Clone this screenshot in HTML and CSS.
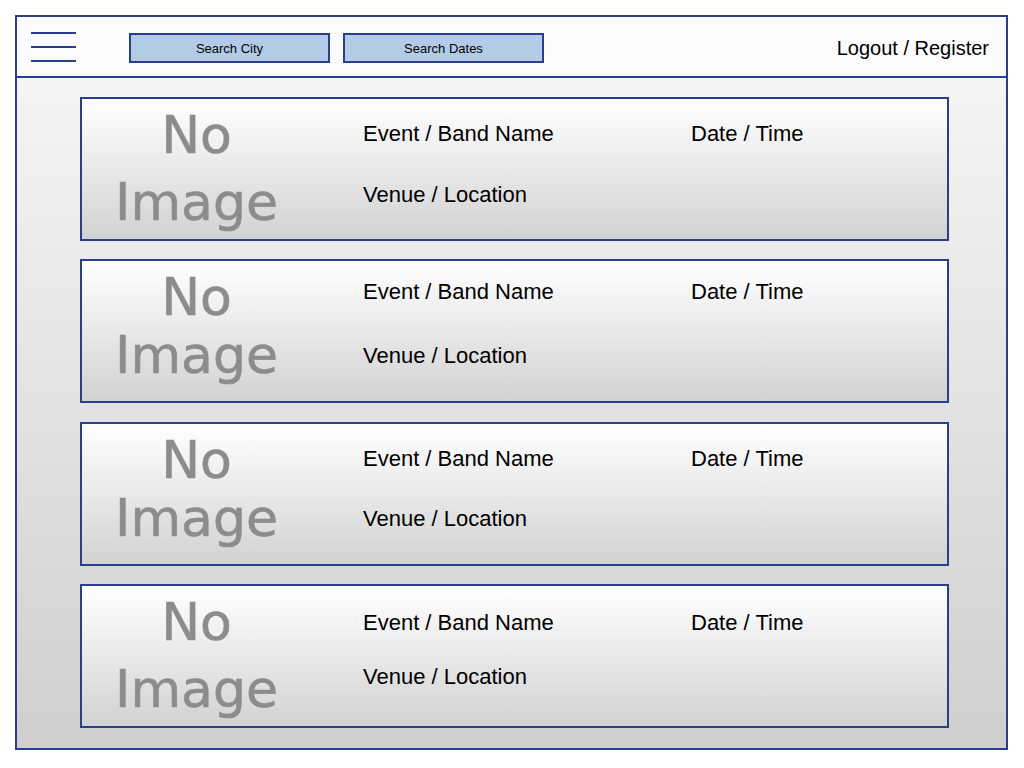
FILE: index.html
```html
<!DOCTYPE html>
<html>
<head>
<meta charset="utf-8">
<title>Events</title>
<link rel="stylesheet" href="styles.css">
</head>
<body>
<div class="frame">
  <header class="topbar">
    <div class="burger"><span></span><span></span><span></span></div>
    <button class="search-btn">Search City</button>
    <button class="search-btn">Search Dates</button>
    <a class="auth">Logout / Register</a>
  </header>
  <main class="list">
    <article class="card">
      <div class="thumb"><span class="w1">No</span><span class="w2">Image</span></div>
      <div class="info">
        <div class="name">Event / Band Name</div>
        <div class="when">Date / Time</div>
        <div class="where">Venue / Location</div>
      </div>
    </article>
    <article class="card">
      <div class="thumb"><span class="w1">No</span><span class="w2">Image</span></div>
      <div class="info">
        <div class="name">Event / Band Name</div>
        <div class="when">Date / Time</div>
        <div class="where">Venue / Location</div>
      </div>
    </article>
    <article class="card">
      <div class="thumb"><span class="w1">No</span><span class="w2">Image</span></div>
      <div class="info">
        <div class="name">Event / Band Name</div>
        <div class="when">Date / Time</div>
        <div class="where">Venue / Location</div>
      </div>
    </article>
    <article class="card">
      <div class="thumb"><span class="w1">No</span><span class="w2">Image</span></div>
      <div class="info">
        <div class="name">Event / Band Name</div>
        <div class="when">Date / Time</div>
        <div class="where">Venue / Location</div>
      </div>
    </article>
  </main>
</div>
</body>
</html>
```

FILE: styles.css
```css
* { box-sizing: border-box; }

body {
  margin: 0;
  background: #ffffff;
  font-family: "Liberation Sans", Arial, sans-serif;
  color: #000;
}

.frame {
  margin: 15px;
  width: 993px;
  height: 735px;
  border: 2px solid #2b3e8c;
  display: flex;
  flex-direction: column;
  background: linear-gradient(#f8f8f8, #cfcfcf);
}

.topbar {
  height: 61px;
  flex: none;
  border-bottom: 2px solid #2b3e8c;
  background: #fbfbfb;
  display: flex;
  align-items: flex-start;
  padding-left: 14px;
  padding-right: 17px;
}

.burger {
  width: 45px;
  height: 30px;
  margin-top: 15px;
  display: flex;
  flex-direction: column;
  justify-content: space-between;
}
.burger span {
  display: block;
  height: 2px;
  background: #2b3e8c;
}

.search-btn {
  width: 201px;
  height: 30px;
  margin-top: 16px;
  margin-left: 13px;
  padding: 0;
  border: 2px solid #2b3e8c;
  background: #b2cce8;
  font-family: "Liberation Sans", Arial, sans-serif;
  font-size: 13px;
  color: #000;
}
.burger + .search-btn { margin-left: 53px; }

.auth {
  margin-left: auto;
  margin-top: 19px;
  font-size: 20px;
  line-height: 24px;
}

.list {
  flex: 1;
  display: flex;
  flex-direction: column;
  gap: 18px;
  padding: 19px 0 0 63px;
}

.card {
  width: 869px;
  height: 144px;
  flex: none;
  border: 2px solid #2b3e8c;
  background: linear-gradient(#ffffff, #d2d2d2);
  display: flex;
}
.card:nth-child(3) { margin-top: 1px; }

/* "No Image" placeholder */
.thumb {
  width: 229px;
  flex: none;
  padding-top: 7px;
  text-align: center;
  font-family: "DejaVu Sans", Verdana, sans-serif;
  font-size: 52px;
  line-height: 58px;
  color: #8c8c8c;
  -webkit-text-stroke: 0.6px #8c8c8c;
  filter: blur(0.75px);
}
.thumb span { display: block; }
.card:nth-child(1) .w2,
.card:nth-child(4) .w2 { margin-top: 9px; }

/* text block */
.info {
  padding: 23px 0 0 52px;
  display: grid;
  grid-template-columns: 328px auto;
  grid-template-rows: 24px 24px;
  row-gap: 37px;
  font-size: 22px;
  line-height: 24px;
  align-content: start;
}
.where { grid-column: 1; }

.card:nth-child(2) .info { padding-top: 19px; row-gap: 40px; }
.card:nth-child(3) .info { row-gap: 36px; }
.card:nth-child(4) .info { padding-top: 25px; row-gap: 30px; }
```
